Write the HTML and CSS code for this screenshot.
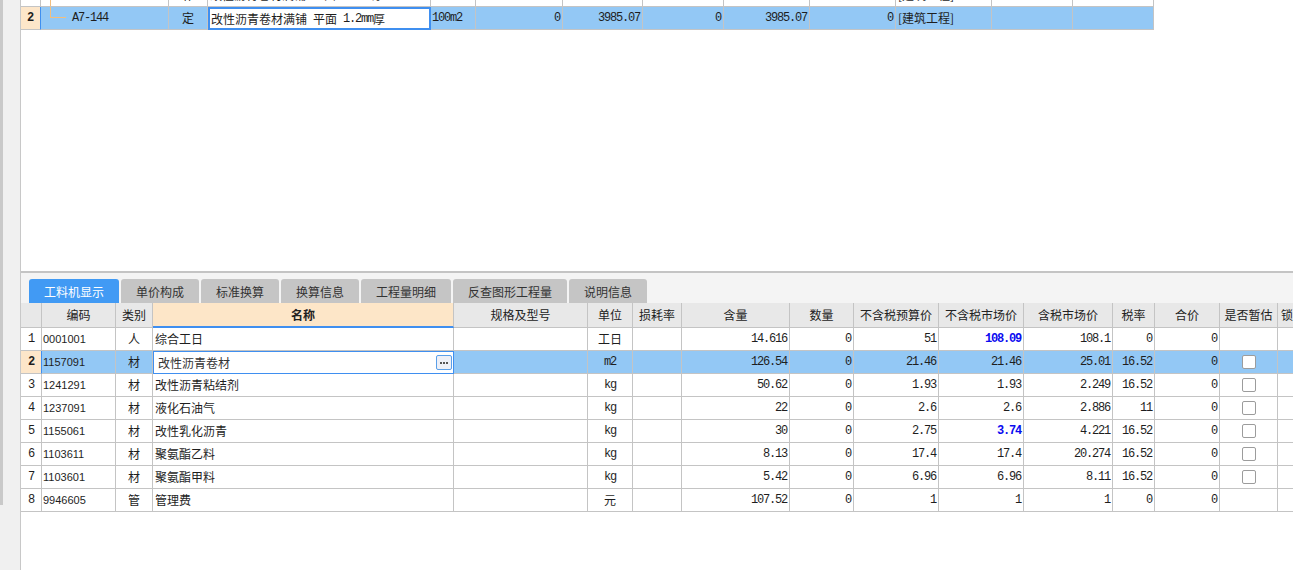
FILE: index.html
```html
<!DOCTYPE html>
<html lang="zh-CN">
<head>
<meta charset="utf-8">
<title>工料机显示</title>
<link rel="stylesheet" href="styles.css">
</head>
<body>
<div class="app">
  <aside class="side"><div class="side-bar"></div></aside>
  <main class="main">
    <section class="top-pane">
      <div class="grid grid-top">
        <div class="row">
          <div class="cell"></div>
          <div class="cell code-tree"><span class="tree-v"></span></div>
          <div class="cell c">补</div>
          <div class="cell">改性沥青卷材满铺<span class="mono sp">&nbsp;</span>立面<span class="mono">&nbsp;1.2mm</span>厚</div>
          <div class="cell"></div>
          <div class="cell"></div>
          <div class="cell"></div>
          <div class="cell"></div>
          <div class="cell"></div>
          <div class="cell"></div>
          <div class="cell">[建筑工程]</div>
          <div class="cell"></div>
          <div class="cell"></div>
        </div>
        <div class="row sel">
          <div class="cell c rn">2</div>
          <div class="cell code-tree"><span class="tree-l"></span><span class="mono">A7-144</span></div>
          <div class="cell c">定</div>
          <div class="cell edit-top">改性沥青卷材满铺<span class="mono sp">&nbsp;</span>平面<span class="mono">&nbsp;1.2mm</span>厚</div>
          <div class="cell mono">100m2</div>
          <div class="cell r mono">0</div>
          <div class="cell r mono">3985.07</div>
          <div class="cell r mono">0</div>
          <div class="cell r mono">3985.07</div>
          <div class="cell r mono">0</div>
          <div class="cell">[建筑工程]</div>
          <div class="cell"></div>
          <div class="cell"></div>
        </div>
      </div>
    </section>
    <div class="divider"></div>
    <nav class="tabs">
      <div class="tab active w90">工料机显示</div>
      <div class="tab w78">单价构成</div>
      <div class="tab w78">标准换算</div>
      <div class="tab w78">换算信息</div>
      <div class="tab w90">工程量明细</div>
      <div class="tab w114">反查图形工程量</div>
      <div class="tab w78">说明信息</div>
    </nav>
    <section class="grid grid-bottom">
      <div class="row head">
        <div class="cell"></div>
        <div class="cell">编码</div>
        <div class="cell">类别</div>
        <div class="cell name-head">名称</div>
        <div class="cell">规格及型号</div>
        <div class="cell">单位</div>
        <div class="cell">损耗率</div>
        <div class="cell">含量</div>
        <div class="cell">数量</div>
        <div class="cell">不含税预算价</div>
        <div class="cell">不含税市场价</div>
        <div class="cell">含税市场价</div>
        <div class="cell">税率</div>
        <div class="cell">合价</div>
        <div class="cell">是否暂估</div>
        <div class="cell lock">锁</div>
      </div>

      <div class="row">
        <div class="cell c mono">1</div>
        <div class="cell code">0001001</div>
        <div class="cell c">人</div>
        <div class="cell">综合工日</div>
        <div class="cell"></div>
        <div class="cell c">工日</div>
        <div class="cell"></div>
        <div class="cell r mono">14.616</div>
        <div class="cell r mono">0</div>
        <div class="cell r mono">51</div>
        <div class="cell r mono blue">108.09</div>
        <div class="cell r mono">108.1</div>
        <div class="cell r mono">0</div>
        <div class="cell r mono">0</div>
        <div class="cell c"></div>
        <div class="cell"></div>
      </div>

      <div class="row sel">
        <div class="cell c mono rn">2</div>
        <div class="cell code">1157091</div>
        <div class="cell c">材</div>
        <div class="cell edit"><span>改性沥青卷材</span><span class="more"><svg width="14" height="13" viewBox="0 0 14 13"><rect x="3" y="6" width="2" height="2" fill="#555"/><rect x="6" y="6" width="2" height="2" fill="#555"/><rect x="9" y="6" width="2" height="2" fill="#555"/></svg></span></div>
        <div class="cell"></div>
        <div class="cell c mono">m2</div>
        <div class="cell"></div>
        <div class="cell r mono">126.54</div>
        <div class="cell r mono">0</div>
        <div class="cell r mono">21.46</div>
        <div class="cell r mono">21.46</div>
        <div class="cell r mono">25.01</div>
        <div class="cell r mono">16.52</div>
        <div class="cell r mono">0</div>
        <div class="cell c"><span class="chk"></span></div>
        <div class="cell"></div>
      </div>

      <div class="row">
        <div class="cell c mono">3</div>
        <div class="cell code">1241291</div>
        <div class="cell c">材</div>
        <div class="cell">改性沥青粘结剂</div>
        <div class="cell"></div>
        <div class="cell c mono">kg</div>
        <div class="cell"></div>
        <div class="cell r mono">50.62</div>
        <div class="cell r mono">0</div>
        <div class="cell r mono">1.93</div>
        <div class="cell r mono">1.93</div>
        <div class="cell r mono">2.249</div>
        <div class="cell r mono">16.52</div>
        <div class="cell r mono">0</div>
        <div class="cell c"><span class="chk"></span></div>
        <div class="cell"></div>
      </div>

      <div class="row">
        <div class="cell c mono">4</div>
        <div class="cell code">1237091</div>
        <div class="cell c">材</div>
        <div class="cell">液化石油气</div>
        <div class="cell"></div>
        <div class="cell c mono">kg</div>
        <div class="cell"></div>
        <div class="cell r mono">22</div>
        <div class="cell r mono">0</div>
        <div class="cell r mono">2.6</div>
        <div class="cell r mono">2.6</div>
        <div class="cell r mono">2.886</div>
        <div class="cell r mono">11</div>
        <div class="cell r mono">0</div>
        <div class="cell c"><span class="chk"></span></div>
        <div class="cell"></div>
      </div>

      <div class="row">
        <div class="cell c mono">5</div>
        <div class="cell code">1155061</div>
        <div class="cell c">材</div>
        <div class="cell">改性乳化沥青</div>
        <div class="cell"></div>
        <div class="cell c mono">kg</div>
        <div class="cell"></div>
        <div class="cell r mono">30</div>
        <div class="cell r mono">0</div>
        <div class="cell r mono">2.75</div>
        <div class="cell r mono blue">3.74</div>
        <div class="cell r mono">4.221</div>
        <div class="cell r mono">16.52</div>
        <div class="cell r mono">0</div>
        <div class="cell c"><span class="chk"></span></div>
        <div class="cell"></div>
      </div>

      <div class="row">
        <div class="cell c mono">6</div>
        <div class="cell code">1103611</div>
        <div class="cell c">材</div>
        <div class="cell">聚氨酯乙料</div>
        <div class="cell"></div>
        <div class="cell c mono">kg</div>
        <div class="cell"></div>
        <div class="cell r mono">8.13</div>
        <div class="cell r mono">0</div>
        <div class="cell r mono">17.4</div>
        <div class="cell r mono">17.4</div>
        <div class="cell r mono">20.274</div>
        <div class="cell r mono">16.52</div>
        <div class="cell r mono">0</div>
        <div class="cell c"><span class="chk"></span></div>
        <div class="cell"></div>
      </div>

      <div class="row">
        <div class="cell c mono">7</div>
        <div class="cell code">1103601</div>
        <div class="cell c">材</div>
        <div class="cell">聚氨酯甲料</div>
        <div class="cell"></div>
        <div class="cell c mono">kg</div>
        <div class="cell"></div>
        <div class="cell r mono">5.42</div>
        <div class="cell r mono">0</div>
        <div class="cell r mono">6.96</div>
        <div class="cell r mono">6.96</div>
        <div class="cell r mono">8.11</div>
        <div class="cell r mono">16.52</div>
        <div class="cell r mono">0</div>
        <div class="cell c"><span class="chk"></span></div>
        <div class="cell"></div>
      </div>

      <div class="row">
        <div class="cell c mono">8</div>
        <div class="cell code">9946605</div>
        <div class="cell c">管</div>
        <div class="cell">管理费</div>
        <div class="cell"></div>
        <div class="cell c">元</div>
        <div class="cell"></div>
        <div class="cell r mono">107.52</div>
        <div class="cell r mono">0</div>
        <div class="cell r mono">1</div>
        <div class="cell r mono">1</div>
        <div class="cell r mono">1</div>
        <div class="cell r mono">0</div>
        <div class="cell r mono">0</div>
        <div class="cell c"></div>
        <div class="cell"></div>
      </div>
    </section>
  </main>
</div>
</body>
</html>
```

FILE: styles.css
```css
* { box-sizing: border-box; }
html, body { margin: 0; height: 100%; }
body {
  font-family: "Noto Sans CJK SC", "Liberation Sans", sans-serif;
  font-size: 12px;
  color: #1e1e1e;
  background: #fff;
  overflow: hidden;
}
.app { display: flex; height: 570px; }
.side { width: 20px; flex: none; background: #f0f0f0; }
.side-bar { width: 3px; height: 505px; background: #c9c9c9; }
.main {
  flex: 1; min-width: 0;
  border-left: 1px solid #c8c8c8;
  overflow: hidden;
  display: flex; flex-direction: column;
  background: #fff;
}
.top-pane { height: 271px; flex: none; overflow: hidden; }
.grid-top { margin-top: -16px; width: max-content; }
.row { display: flex; }
.cell {
  flex: none;
  height: 23px;
  border-right: 1px solid #c4c4c4;
  border-bottom: 1px solid #c4c4c4;
  display: flex; align-items: center;
  padding: 0 2px;
  overflow: hidden;
  white-space: nowrap;
  line-height: 1;
}
.cell.c { justify-content: center; }
.cell.r { justify-content: flex-end; padding-right: 2px; }
.mono {
  font-family: "Liberation Mono", monospace;
  font-size: 12px;
  letter-spacing: -1.2px;
}
.sp { display: inline-block; width: 6px; }
.code { font-family: "Liberation Sans", sans-serif; font-size: 11px; padding-left: 1px; }
.blue { color: #0b0bf0; font-weight: bold; }

/* top grid columns */
.grid-top .cell:nth-child(1) { width: 20px; }
.grid-top .cell:nth-child(2) { width: 128px; }
.grid-top .cell:nth-child(3) { width: 39px; }
.grid-top .cell:nth-child(4) { width: 223px; }
.grid-top .cell:nth-child(5) { width: 45px; padding-left: 1px; }
.grid-top .cell:nth-child(6) { width: 87px; }
.grid-top .cell:nth-child(7) { width: 80px; }
.grid-top .cell:nth-child(8) { width: 81px; }
.grid-top .cell:nth-child(9) { width: 86px; }
.grid-top .cell:nth-child(10) { width: 86px; }
.grid-top .cell:nth-child(11) { width: 96px; }
.grid-top .cell:nth-child(12) { width: 81px; }
.grid-top .cell:nth-child(13) { width: 81px; }

.code-tree { align-items: stretch; padding: 0; }
.tree-v { width: 1px; margin-left: 9px; background: #f3bf7e; }
.tree-l {
  width: 16px; height: 11px; flex: none;
  margin-left: 9px; margin-right: 6px;
  border-left: 1px solid #f3bf7e;
  border-bottom: 1px solid #f3bf7e;
}
.code-tree .mono { align-self: center; }
.edit-top {
  background: #fff !important;
  border: 2px solid #3f8ff0 !important;
  padding-left: 1px;
}

/* selection */
.row.sel .cell { background: #93c8f5; }
.row.sel .cell.rn {
  background: #fde6c9;
  font-weight: bold;
  border-right-color: #3f8ff0;
}
.rn { font-family: "Liberation Mono", monospace; font-weight: bold; }

.divider { height: 2px; flex: none; background: #c4c4c4; }

.tabs {
  height: 30px; flex: none;
  background: #f4f4f4;
  display: flex; align-items: flex-end; gap: 2px;
  padding-left: 8px;
}
.tab {
  height: 24px;
  display: flex; align-items: center; justify-content: center;
  background: #c5c5c5;
  color: #333;
  border-radius: 3px 3px 0 0;
  font-size: 12px;
}
.tab.active { background: #419af4; color: #fff; }
.w90 { width: 90px; }
.w78 { width: 78px; }
.w114 { width: 114px; }

/* bottom grid */
.grid-bottom { flex: none; }
.grid-bottom .cell:nth-child(1) { width: 21px; }
.grid-bottom .cell:nth-child(2) { width: 74px; }
.grid-bottom .cell:nth-child(3) { width: 37px; }
.grid-bottom .cell:nth-child(4) { width: 301px; }
.grid-bottom .cell:nth-child(5) { width: 134px; }
.grid-bottom .cell:nth-child(6) { width: 45px; }
.grid-bottom .cell:nth-child(7) { width: 49px; }
.grid-bottom .cell:nth-child(8) { width: 108px; }
.grid-bottom .cell:nth-child(9) { width: 64px; }
.grid-bottom .cell:nth-child(10) { width: 85px; }
.grid-bottom .cell:nth-child(11) { width: 85px; }
.grid-bottom .cell:nth-child(12) { width: 89px; }
.grid-bottom .cell:nth-child(13) { width: 42px; }
.grid-bottom .cell:nth-child(14) { width: 65px; }
.grid-bottom .cell:nth-child(15) { width: 58px; }
.grid-bottom .cell:nth-child(16) { width: 40px; }

.row.head .cell {
  height: 25px;
  background: #e8e8e8;
  justify-content: center;
  color: #222;
}
.row.head .cell.lock { justify-content: flex-start; padding-left: 3px; }
.row.head .cell.name-head {
  background: #fde6c8;
  font-weight: bold;
  border-bottom: 2px solid #3f8ff0;
}
.grid-bottom .row .cell:first-child { justify-content: center; }

.cell.edit {
  background: #fff !important;
  border: 1px solid #3f8ff0 !important;
  padding-left: 4px;
  padding-right: 1px;
  justify-content: space-between;
  color: #333;
}
.more {
  width: 16px; height: 15px;
  border: 1px solid #5b9fe8;
  border-radius: 2px;
  background: #eef0f7;
  display: flex; align-items: center; justify-content: center;
}
.more svg { display: block; }

.chk {
  width: 14px; height: 14px;
  border: 1px solid #9c9c9c;
  border-radius: 2px;
  background: #fff;
}
```
